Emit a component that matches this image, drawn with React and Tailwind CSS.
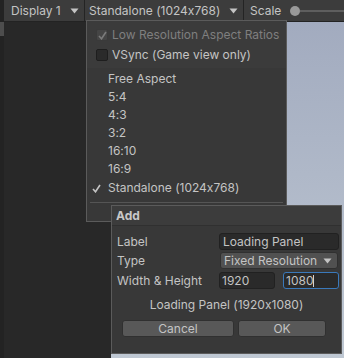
import React from "react";

const font = { fontFamily: "Inter, 'Noto Sans', sans-serif" };

function Arrow({ className = "" }) {
  return (
    <svg width="9" height="6" viewBox="0 0 9 6" className={className}>
      <path d="M0.5 0.5 L8.5 0.5 L4.5 5.5 Z" fill="#c4c4c4" />
    </svg>
  );
}

function Check({ color = "#c4c4c4" }) {
  return (
    <svg width="9" height="9" viewBox="0 0 9 9">
      <path d="M1 5 L3.5 7.8 L8 1" stroke={color} strokeWidth="1.6" fill="none" />
    </svg>
  );
}

export default function App() {
  const items = ["Free Aspect", "5:4", "4:3", "3:2", "16:10", "16:9"];
  return (
    <div className="relative w-[344px] h-[358px] overflow-hidden bg-[#282828] text-[12px] text-[#c4c4c4] [font-feature-settings:'calt'_0]" style={font}>
      {/* Toolbar */}
      <div className="flex h-[22px] bg-[#191919]">
        <div className="w-[4px] bg-[#232323]" />
        <div className="flex flex-1 items-center bg-[#3c3c3c] border-b border-[#232323]">
          <div className="flex items-center w-[81px] h-full pl-[7px] pr-[5px] justify-between border-r border-[#242424]">
            <span>Display 1</span>
            <Arrow />
          </div>
          <div className="flex items-center w-[159px] h-full pl-[4px] pr-[5px] justify-between border-r border-[#242424]">
            <span>Standalone (1024x768)</span>
            <Arrow />
          </div>
          <div className="flex items-center flex-1 h-full pl-[6px]">
            <span>Scale</span>
            <div className="ml-[9px] w-[10px] h-[10px] rounded-full bg-[#999999]" />
            <div className="flex-1 h-[2px] bg-[#5e5e5e]" />
          </div>
        </div>
      </div>
      {/* Body */}
      <div className="flex h-[336px]">
        <div className="w-[4px] flex flex-col">
          <div className="h-[14px] bg-[#4d4d4d]" />
          <div className="flex-1 bg-[#232323]" />
        </div>
        <div className="w-[107px] bg-[#282828]" />
        <div className="flex-1 bg-gradient-to-b from-[#a2abbf] to-[#bfc8d3]" />
      </div>

      {/* Dropdown menu */}
      <div className="absolute left-[86px] top-[20px] w-[201px] h-[202px] bg-[#383838] border border-[#5b5b5b] flex flex-col">
        <div className="bg-[#3b3b3b] pt-[7px] pb-[6px]">
          <div className="flex items-center h-[14px] pl-[9px] mb-[6px]">
            <div className="w-[12px] h-[12px] rounded-[2px] bg-[#454545] border border-[#3a3a3a] flex items-center justify-center">
              <Check color="#7b7b7b" />
            </div>
            <span className="ml-[4px] text-[#7f7f7f]">Low Resolution Aspect Ratios</span>
          </div>
          <div className="flex items-center h-[14px] pl-[9px]">
            <div className="w-[12px] h-[12px] rounded-[2px] bg-[#2a2a2a] border border-[#1e1e1e]" />
            <span className="ml-[4px]">VSync (Game view only)</span>
          </div>
        </div>
        <div className="flex flex-col pt-[2px]">
          {items.map((t) => (
            <div key={t} className="h-[18px] flex items-center pl-[21px]">{t}</div>
          ))}
          <div className="h-[18px] flex items-center pl-[5px] mt-[1px]">
            <span className="w-[16px]"><Check /></span>
            <span>Standalone (1024x768)</span>
          </div>
        </div>
        <div className="mx-[3px] mt-[5px] h-px bg-[#555555]" />
      </div>

      {/* Add dialog */}
      <div className="absolute left-[111px] top-[205px] w-[231px] h-[149px] bg-[#383838] border border-[#5b5b5b] flex flex-col">
        <div className="h-[20px] flex items-center pl-[4px] font-bold bg-[#3c3c3c] border-b border-[#303030] text-[#c8c8c8]">Add</div>
        <div className="flex flex-col pl-[5px] pr-[2px] pt-[7px]">
          <div className="flex items-center h-[17px]">
            <span className="w-[102px]">Label</span>
            <div className="flex-1 h-[17px] rounded-[3px] bg-[#2a2a2a] border border-[#212121] flex items-center pl-[3px]">Loading Panel</div>
          </div>
          <div className="flex items-center h-[17px] mt-[2px]">
            <span className="w-[103px]">Type</span>
            <div className="flex-1 h-[17px] rounded-[3px] bg-[#515151] border border-[#303030] flex items-center justify-between pl-[3px] pr-[5px] mr-[1px]">
              <span>Fixed Resolution</span>
              <Arrow />
            </div>
          </div>
          <div className="flex items-center h-[17px] mt-[3px]">
            <span className="w-[102px]">Width &amp; Height</span>
            <div className="w-[56px] h-[17px] rounded-[3px] bg-[#2a2a2a] border border-[#212121] flex items-center pl-[2px]">1920</div>
            <div className="ml-[8px] flex-1 h-[17px] rounded-[3px] bg-[#2a2a2a] border border-[#3a79bb] flex items-center pl-[2px]">
              1080<span className="w-px h-[12px] bg-[#d0d0d0]" />
            </div>
          </div>
          <div className="h-[18px] mt-[7px] flex items-center justify-center pr-[3px]">Loading Panel (1920x1080)</div>
          <div className="flex mt-[6px] pl-[5px] gap-[4px]">
            <div className="w-[112px] h-[17px] rounded-[3px] bg-[#585858] border border-[#303030] flex items-center justify-center">Cancel</div>
            <div className="w-[88px] h-[17px] rounded-[3px] bg-[#585858] border border-[#303030] flex items-center justify-center">OK</div>
          </div>
        </div>
      </div>
    </div>
  );
}
